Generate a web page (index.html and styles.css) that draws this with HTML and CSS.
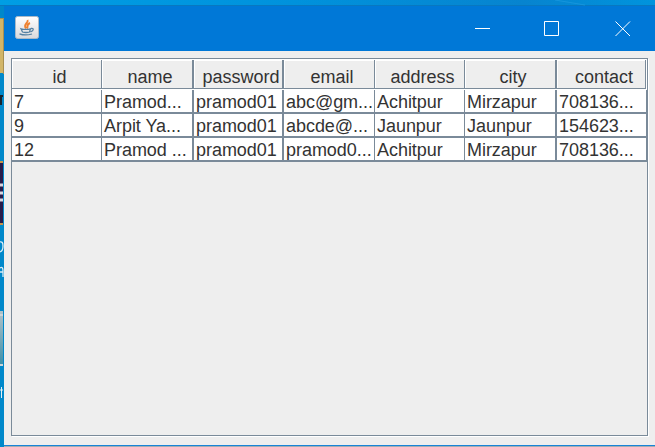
FILE: index.html
```html
<!DOCTYPE html>
<html lang="en">
<head>
<meta charset="utf-8">
<title>Table</title>
<link rel="stylesheet" href="styles.css">
</head>
<body>
<div class="desktop">
  <svg class="wallpaper" width="655" height="447" viewBox="0 0 655 447">
    <defs>
      <linearGradient id="sky"><stop offset="0" stop-color="#009ee4"/><stop offset=".45" stop-color="#0092dc"/><stop offset=".8" stop-color="#0784cf"/><stop offset="1" stop-color="#0094dd"/></linearGradient>
      <linearGradient id="glass" x2="0" y2="1"><stop offset="0" stop-color="#b4c3c9"/><stop offset="1" stop-color="#3b8fa9"/></linearGradient>
    </defs>
    <rect width="655" height="447" fill="#0088ca"/>
    <rect width="655" height="6" fill="url(#sky)"/>
    <path d="M0 5.500H655" stroke="#0878c0"/>
    <path d="M555 0L585 5" stroke="#1695dc"/>
    <rect y="18" width="3" height="55" fill="#d2b567"/>
    <path d="M0 18.500H3M3.500 18V74" stroke="#a88f50"/>
    <path d="M0 96H3M1 97V105" stroke="#17242e" stroke-width="2"/>
    <rect y="162" width="3" height="61" fill="#281b49"/>
    <path d="M0 162H3M0 224H3" stroke="#c9944a" stroke-width="2"/>
    <path d="M0 185H3M0 193H3M0 200H3" stroke="#d8d6df" stroke-width="3"/>
    <path d="M0 242Q3 241 3 246T0 252M0 268Q3 266 3 271V277M0 272H3" fill="none" stroke="#d9edf5" stroke-width="1.300"/>
    <rect y="311" width="3" height="54" fill="url(#glass)"/>
    <path d="M0 315H3M0 365H3" stroke="#cbd5d8" stroke-width="2"/>
    <path d="M1.500 387V398M0 390H3" stroke="#e4eef2"/>
  </svg>
  <main class="window">
    <header class="titlebar">
      <svg class="java" width="24" height="24" viewBox="0 0 24 24">
        <defs><linearGradient id="tile" x2="0" y2="1"><stop offset="0" stop-color="#fff"/><stop offset="1" stop-color="#d8d9dc"/></linearGradient></defs>
        <rect x=".5" y=".5" width="23" height="22" rx="2" fill="url(#tile)" stroke="#a9b9c8"/>
        <path d="M12.500 4C14 7 7.500 8 11 12.500M15 7C11 8.500 13.500 10 12 12.500" fill="none" stroke="#ee8130" stroke-width="1.900"/>
        <path d="M6 12.800Q11 14 15.500 12.800L14.500 16Q11 17 7.500 16ZM16 12.500Q19.500 12 17.500 14.800L15.500 16M4.500 17.800Q10 20 17 18" fill="none" stroke="#5580a2" stroke-width="1.300"/>
      </svg>
      <div class="controls">
        <svg width="16" height="16" viewBox="0 0 16 16"><path d="M0 8.500H15"/></svg>
        <svg width="16" height="16" viewBox="0 0 16 16"><path d="M.5 1.500H14.500V15.500H.5Z"/></svg>
        <svg width="16" height="16" viewBox="0 0 16 16"><path d="M.5 1.500L15 16M15 1.500L.5 16"/></svg>
      </div>
    </header>
    <section class="content">
      <div class="scrollpane">
        <div class="row head"><div>id</div><div>name</div><div>password</div><div>email</div><div>address</div><div>city</div><div>contact</div></div>
        <div class="row"><div>7</div><div>Pramod...</div><div>pramod01</div><div>abc@gm...</div><div>Achitpur</div><div>Mirzapur</div><div>708136...</div></div>
        <div class="row"><div>9</div><div>Arpit Ya...</div><div>pramod01</div><div>abcde@...</div><div>Jaunpur</div><div>Jaunpur</div><div>154623...</div></div>
        <div class="row"><div>12</div><div>Pramod ...</div><div>pramod01</div><div>pramod0...</div><div>Achitpur</div><div>Mirzapur</div><div>708136...</div></div>
      </div>
    </section>
    <footer class="edge"></footer>
  </main>
</div>
</body>
</html>
```
FILE: styles.css
```css
* { box-sizing: border-box; }
body { margin: 0; overflow: hidden; font: 18px/24px "Liberation Sans", Arial, sans-serif; color: #333; }
.desktop { position: relative; width: 655px; height: 447px; padding: 6px 0 0 4px; }
.wallpaper { position: absolute; inset: 0; }
.window { position: relative; display: flex; flex-direction: column; height: 441px; background: #eee; }
.titlebar { display: flex; justify-content: space-between; height: 45px; padding: 10px 24px 0 11px; background: #0078d7; }
.controls { display: flex; gap: 53px; padding-top: 4px; }
.controls svg { display: block; fill: none; stroke: #fff; stroke-width: 1; }
.controls svg:nth-child(3) { margin-left: 2px; }
.content { flex: 1; padding: 7px 6px 8px 7px; }
.scrollpane { width: 637px; height: 378px; border: 1px solid #7a8a99; box-shadow: 1px 1px #fff; }
.row { display: grid; grid-template-columns: 90px 92px 90px 91px 90px 92px 90px; height: 24px; letter-spacing: -.04px; }
.row div { height: 24px; padding-left: 2px; line-height: 25px; white-space: nowrap; overflow: hidden; background: #fff; border: solid #7a8a99; border-width: 0 1px 2px 0; }
.row div:nth-child(2), .row div:nth-child(3), .row div:nth-child(6) { border-right-width: 2px; }
.head { height: 31px; padding-top: 1px; background: #fff; letter-spacing: 0; }
.row.head div { height: 29px; padding: 4px 0 0 6px; line-height: 27px; text-align: center; background: #eee; border-bottom-width: 1px; box-shadow: inset 1px 1px #fff; }
.row.head div:last-child { margin-right: 1px; }
.edge { height: 2px; background: #a5adb2; border-top: 1px solid #1883d7; }
```
